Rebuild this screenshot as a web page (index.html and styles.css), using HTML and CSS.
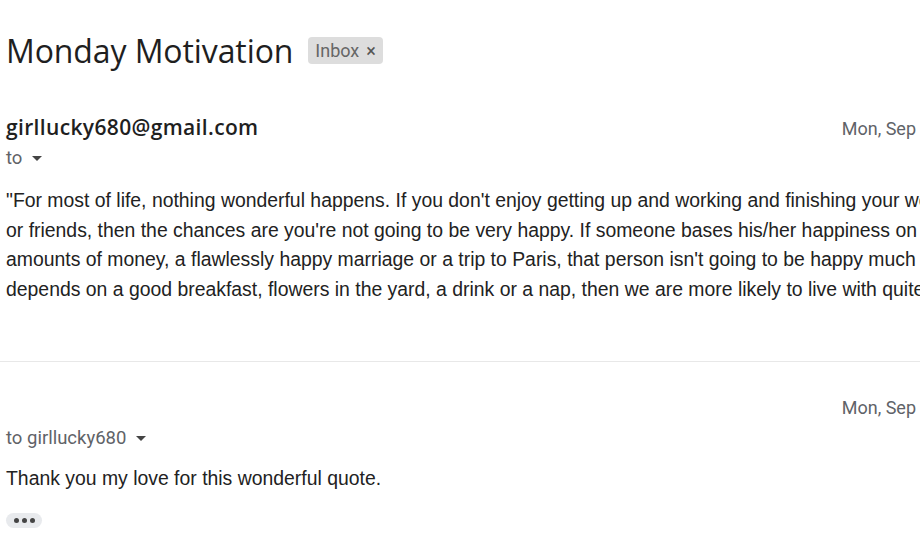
FILE: index.html
```html
<!DOCTYPE html>
<html>
<head>
<meta charset="utf-8">
<link rel="stylesheet" href="styles.css">
</head>
<body>
<div class="page">
  <div class="subject-row">
    <h1 class="subject">Monday Motivation</h1>
    <span class="chip">Inbox <span class="chip-x">×</span></span>
  </div>

  <div class="message">
    <div class="head">
      <div class="sender">girllucky680@gmail.com</div>
      <div class="date">Mon, Sep</div>
    </div>
    <div class="to">to <span class="caret"></span></div>
    <div class="body">
      <div class="line">"For most of life, nothing wonderful happens. If you don't enjoy getting up and working and finishing your work and sitting down to a meal with family</div>
      <div class="line">or friends, then the chances are you're not going to be very happy. If someone bases his/her happiness on major events like a great job, huge</div>
      <div class="line">amounts of money, a flawlessly happy marriage or a trip to Paris, that person isn't going to be happy much of the time. If, on the other hand, happiness</div>
      <div class="line">depends on a good breakfast, flowers in the yard, a drink or a nap, then we are more likely to live with quite a bit of happiness."</div>
    </div>
  </div>

  <div class="divider"></div>

  <div class="message second">
    <div class="head">
      <div class="sender blank">&nbsp;</div>
      <div class="date">Mon, Sep</div>
    </div>
    <div class="to">to girllucky680 <span class="caret"></span></div>
    <div class="reply">Thank you my love for this wonderful quote.</div>
    <div class="dots"><span></span><span></span><span></span></div>
  </div>
</div>
</body>
</html>
```

FILE: styles.css
```css
* { box-sizing: border-box; }
html, body {
  margin: 0;
  background: #fff;
  overflow: hidden;
}
.page {
  width: 920px;
  height: 552px;
  overflow: hidden;
  padding-left: 6px;
  font-family: Roboto, "Liberation Sans", sans-serif;
  color: #222;
}
.subject-row {
  display: flex;
  align-items: center;
  height: 100px;
}
.subject {
  margin: 0;
  font-family: "Open Sans", Roboto, sans-serif;
  font-weight: 400;
  font-size: 32px;
  color: #1f1f1f;
  letter-spacing: -0.1px;
}
.chip {
  margin-left: 15px;
  margin-top: 0;
  background: #ddd;
  border-radius: 4px;
  height: 27px;
  padding: 0 7px 0 7px;
  display: flex;
  align-items: center;
  font-size: 18px;
  color: #666;
}
.chip-x {
  margin-left: 7px;
  font-size: 18px;
  color: #555;
}
.message .head {
  display: flex;
  justify-content: space-between;
  align-items: baseline;
  padding-top: 13px;
}
.sender {
  font-family: "Open Sans", Roboto, sans-serif;
  font-size: 21px;
  font-weight: 600;
  letter-spacing: 0.35px;
  color: #1f1f1f;
}
.date {
  font-size: 18px;
  color: #5f6368;
  margin-right: 4px;
}
.to {
  display: flex;
  align-items: center;
  font-size: 18.5px;
  color: #5f6368;
  margin-top: 6px;
  height: 22px;
}
.caret {
  width: 0;
  height: 0;
  border-left: 5.5px solid transparent;
  border-right: 5.5px solid transparent;
  border-top: 5.5px solid #444;
  margin-left: 10px;
  margin-top: 1px;
}
.body {
  margin-top: 17px;
  font-family: "Liberation Sans", Arial, sans-serif;
  font-size: 19.4px;
  line-height: 29.6px;
  color: #222;
}
.line {
  white-space: nowrap;
}
.divider {
  margin-top: 57px;
  margin-left: -6px;
  height: 1px;
  background: #e8e8e8;
}
.second .head {
  padding-top: 30px;
}
.second .to {
  margin-top: 7px;
}
.reply {
  margin-top: 17px;
  font-family: "Liberation Sans", Arial, sans-serif;
  font-size: 19.4px;
  line-height: 24px;
  color: #222;
}
.dots {
  margin-top: 23px;
  width: 36px;
  height: 15px;
  border-radius: 8px;
  background: #e8eaed;
  display: flex;
  align-items: center;
  justify-content: center;
  gap: 3px;
}
.dots span {
  width: 5px;
  height: 5px;
  border-radius: 50%;
  background: #444;
}
```
